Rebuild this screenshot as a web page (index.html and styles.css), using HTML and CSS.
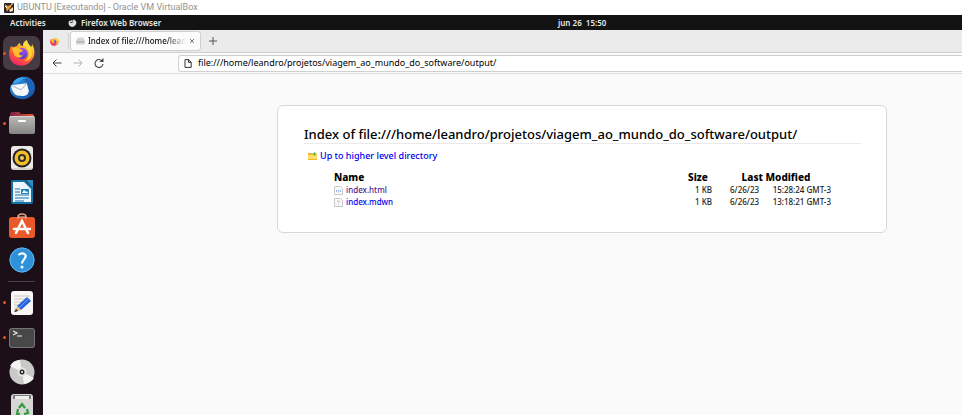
FILE: index.html
```html
<!DOCTYPE html>
<html lang="en">
<head>
<meta charset="utf-8">
<meta name="viewport" content="width=device-width, initial-scale=1">
<title>UBUNTU [Executando] - Oracle VM VirtualBox</title>
<link rel="stylesheet" href="styles.css">
</head>
<body>
<svg class="defs" width="0" height="0" aria-hidden="true">
  <defs>
    <linearGradient id="flame" x1=".8" y1="0" x2=".25" y2="1">
      <stop offset="0" stop-color="#fff04a"/><stop offset=".35" stop-color="#ffae28"/>
      <stop offset=".65" stop-color="#ff5a36"/><stop offset="1" stop-color="#e91f70"/>
    </linearGradient>
    <radialGradient id="globe" cx=".6" cy=".25" r=".8">
      <stop offset="0" stop-color="#a04df0"/><stop offset="1" stop-color="#4a3cc4"/>
    </radialGradient>
    <linearGradient id="bird" x1="0" y1="0" x2="1" y2="1">
      <stop offset="0" stop-color="#2f9be8"/><stop offset="1" stop-color="#174aa0"/>
    </linearGradient>
    <linearGradient id="silver" x1="0" y1="0" x2="0" y2="1">
      <stop offset="0" stop-color="#b9b9b7"/><stop offset="1" stop-color="#858583"/>
    </linearGradient>
    <linearGradient id="lid" x1="0" y1="0" x2="1" y2="0">
      <stop offset="0" stop-color="#7a2148"/><stop offset="1" stop-color="#e9592b"/>
    </linearGradient>
    <symbol id="firefox" viewBox="0 0 26 26">
      <path fill="url(#flame)" d="M2 6c1 1 2 1 3 1 1 0 2-1 3-1 1-2 2-3 3-3 0 2 1 3 3 3 0-3 1-5 4-6 0 3 2 4 4 7 1-1 1-2 1-3 4 7 3 14-2 18-5 5-13 5-18 0C0 18-1 12 2 6z"/>
      <circle cx="13" cy="13.500" r="5.500" fill="url(#globe)"/>
      <path fill="#ffbd2e" d="M3 8c3-1 6-1 8 1l3 1c-1 2-3 2-4 3 0 2 2 3 4 2-2 4-8 3-9-1-1-2-2-4-2-6z"/>
      <path fill="#ffd93b" d="M14 6c4 1 6 4 6 8 0 3-2 6-5 7 7 0 9-6 7-12-1-3-3-4-4-8-2 1-4 3-4 5z"/>
    </symbol>
  </defs>
</svg>

<header class="titlebar">
  <svg class="vm-icon" viewBox="0 0 10 10" aria-hidden="true"><rect width="10" height="10" rx="1" fill="#27252b"/><path d="M1 1l3 2 4-2-1 3-3 3-1 2-1-4z" fill="#e99d30"/><path d="M5 7l4-3v4l-3 1z" fill="#f4dfac"/><path d="M1 3l2 2M7 1h2" stroke="#fff"/></svg>
  <span>UBUNTU [Executando] - Oracle VM VirtualBox</span>
</header>

<div class="panel">
  <button class="activities" type="button">Activities</button>
  <button class="app-menu" type="button">
    <svg viewBox="0 0 26 26" aria-hidden="true"><path fill="#ddd" d="M2 6l6 0 3-3 3 3 4-6 4 7 1-3c4 7 3 14-2 18-5 5-13 5-18 0C0 18-1 12 2 6z"/><path d="M5 11h6l4-2" stroke="#333" stroke-width="3" fill="none"/></svg>
    Firefox Web Browser
  </button>
  <time class="clock">jun 26&nbsp; 15:50</time>
</div>

<div class="desktop">
  <nav class="dock" aria-label="Dock">
    <button class="app running active" type="button" aria-label="Firefox"><svg viewBox="0 0 26 26"><use href="#firefox"/></svg></button>
    <button class="app" type="button" aria-label="Thunderbird"><svg viewBox="0 0 28 26">
      <path fill="url(#bird)" d="M4 8C7 2 13 0 18 1c6 1 10 6 10 12 0 7-6 12-13 12C8 25 2 22 1 15c0-3 1-5 3-7z"/>
      <path fill="#f5f7fa" d="M2 10l17-2 3 10c-3 4-8 4-13 3-4-1-6-6-7-11z"/>
      <path fill="none" stroke="#9eabbc" d="M2 10l11 5 6-7"/>
      <path fill="#1b62b8" d="M11 2c6-2 13 1 15 7 1 7-3 12-9 15 5-5 6-11 3-16-2-3-5-4-9-6z"/>
      <path fill="#3aa7ef" d="M6 5c4-4 9-4 13-2-4 0-7 1-9 4l-6 1z"/></svg></button>
    <button class="app running" type="button" aria-label="Files"><svg viewBox="0 0 26 26">
      <path fill="url(#lid)" d="M1 4q0-2 2-2h7l2 2h11q2 0 2 2v7H1z"/>
      <rect y="6" width="26" height="18" rx="2" fill="url(#silver)"/><path d="M1 6.500h24" stroke="#d5d5d3"/>
      <rect x="9" y="10" width="8" height="2" rx="1" fill="#fff"/></svg></button>
    <button class="app" type="button" aria-label="Rhythmbox"><svg viewBox="0 0 26 26">
      <rect x="2" y="1" width="22" height="24" rx="3" fill="#ece9e4"/><path d="M4 24h18" stroke="#bdb8b2"/>
      <circle cx="13" cy="13" r="9.500" fill="#222"/><circle cx="13" cy="13" r="7.500" fill="#f2bd26"/>
      <circle cx="13" cy="13" r="4" fill="#34312b"/><circle cx="13" cy="13" r="2" fill="#f4cf55"/></svg></button>
    <button class="app" type="button" aria-label="LibreOffice Writer"><svg viewBox="0 0 26 26">
      <path fill="#1473a7" d="M4 1h12l8 8v14q0 2-2 2H4q-2 0-2-2V3q0-2 2-2z"/>
      <path fill="#eef7fc" d="M4 3h11l7 7v13H4z"/><path fill="#2d8cc0" d="M17 1h7v8z"/>
      <path d="M6 10h5M6 13h5M6 16h14M6 19h14M6 22h9" stroke="#1977ab"/>
      <rect x="12" y="10" width="8" height="5" fill="#2183b8"/><path fill="#fff" d="M13 14l2-3 2 2 1-1 1 2z"/></svg></button>
    <button class="app" type="button" aria-label="Ubuntu Software"><svg viewBox="0 0 26 26">
      <path d="M9 6V4q0-3 4-3t4 3v2" fill="none" stroke="#d9a184" stroke-width="1.500"/>
      <rect y="4" width="26" height="21" rx="3" fill="#e95a2b"/><path d="M9 6V4h8v2" fill="none" stroke="#f7c3a9"/>
      <path d="M7 20l6-12 6 12M5 16h16" fill="none" stroke="#fff" stroke-width="2.500" stroke-linecap="round"/></svg></button>
    <button class="app" type="button" aria-label="Help"><svg viewBox="0 0 26 26">
      <circle cx="13" cy="13" r="12.500" fill="#2e91da"/><circle cx="13" cy="13" r="12" fill="none" stroke="#62b4eb"/>
      <path d="M9.500 8q3.500-3 6.500-.5c3 3-3 5-3 9" fill="none" stroke="#fff" stroke-width="2.200"/><circle cx="13" cy="20" r="1.500" fill="#fff"/></svg></button>
    <hr class="divider">
    <button class="app running" type="button" aria-label="Text Editor"><svg viewBox="0 0 26 26">
      <rect x="2" y="1" width="22" height="24" rx="3" fill="#f8f7f5"/><path d="M5 6h16M5 9h16M5 12h16M5 15h9M5 18h5" stroke="#c8c6c2"/>
      <path fill="#2867d8" d="M18 7l4 4-10 9-4-4z"/><path d="M19 9l-9 9" stroke="#6da0f2"/><path fill="#e6b988" d="M8 16l4 4-6 2z"/><path fill="#222" d="M7 19l2 2-4 1z"/></svg></button>
    <button class="app running" type="button" aria-label="Terminal"><svg viewBox="0 0 26 26">
      <rect y="3" width="26" height="20" rx="3" fill="#747474"/><rect x="1" y="4" width="24" height="18" rx="2" fill="#484848"/>
      <path d="M4 6l4 2-4 2M8 11h5" stroke="#eee" fill="none" stroke-width="1.200"/></svg></button>
    <button class="app" type="button" aria-label="Disc"><svg viewBox="0 0 26 26">
      <circle cx="13" cy="13" r="12.500" fill="#c9c9c7"/><path fill="#f3f3f2" d="M13 13L1 7Q4 1 11 1zM13 13l12 6q-3 5-10 6z"/>
      <circle cx="13" cy="13" r="4.500" fill="#e5e5e3"/><circle cx="13" cy="13" r="2.500" fill="#292929"/><circle cx="13" cy="13" r="1" fill="#fff"/></svg></button>
    <button class="app" type="button" aria-label="Trash"><svg viewBox="0 0 26 26">
      <rect x="2" y="1" width="22" height="25" rx="3" fill="#d6d6d4"/><rect x="4" y="2" width="18" height="4" rx="1" fill="#777"/><path fill="#efefed" d="M6 3h14v3H6z"/>
      <path d="M10 15l3-4 3 4M18 16l1 4-4 1M11 21H8l1-5" fill="none" stroke="#2f9b3b" stroke-width="2.200"/></svg></button>
  </nav>

  <main class="browser">
    <div class="tabs">
      <button class="pinned" type="button" aria-label="Firefox View"><svg viewBox="0 0 26 26"><use href="#firefox"/></svg></button>
      <div class="tab">
        <svg class="drive" viewBox="0 0 10 8" aria-hidden="true"><path fill="#d5d5d8" d="M2 0h6l2 4v3q0 1-1 1H1Q0 8 0 7V4z"/><path d="M1 5h8" stroke="#9b9ba0"/></svg>
        <span class="tab-title">Index of file:///home/lean</span>
        <button class="close" type="button" aria-label="Close tab"><svg viewBox="0 0 6 6"><path d="M1 1l4 4M5 1L1 5" stroke="#555" stroke-width=".8"/></svg></button>
      </div>
      <button class="new-tab" type="button" aria-label="New tab"><svg viewBox="0 0 8 8"><path d="M4 0v8M0 4h8" stroke="#444" stroke-width=".9"/></svg></button>
    </div>
    <div class="toolbar">
      <button class="nav" type="button" aria-label="Back"><svg viewBox="0 0 10 10"><path d="M9.500 5H1M4.500 1.500L1 5l3.500 3.500" fill="none" stroke="#444"/></svg></button>
      <button class="nav" type="button" aria-label="Forward" disabled><svg viewBox="0 0 10 10"><path d="M.5 5H9M5.500 1.500L9 5 5.500 8.500" fill="none" stroke="#b4b4b4"/></svg></button>
      <button class="nav" type="button" aria-label="Reload"><svg viewBox="0 0 10 10"><path d="M8.500 3.500A4 4 0 1 0 9 6" fill="none" stroke="#444" stroke-width="1.100"/><path fill="#444" d="M9.500 0v4h-4z"/></svg></button>
      <label class="address">
        <svg viewBox="0 0 8 9" aria-hidden="true"><path d="M1 .6h3.500L7.200 3.300v5.100H1zM4.500.6v2.700h2.700" fill="none" stroke="#333" stroke-width="1"/></svg>
        <input type="text" aria-label="Address" value="file:///home/leandro/projetos/viagem_ao_mundo_do_software/output/">
      </label>
    </div>
    <div class="page">
      <section class="card">
        <h1>Index of file:///home/leandro/projetos/viagem_ao_mundo_do_software/output/</h1>
        <a class="up" href="#"><svg viewBox="0 0 9 8" aria-hidden="true"><path fill="#f0b928" d="M0 1h4l1 1h4v6H0z"/><path fill="#ffdc66" d="M0 3h9v4H0z"/><path fill="#5cb85a" d="M6.500 0L8.500 2H7.300v1.500H5.700V2H4.500z"/></svg>Up to higher level directory</a>
        <table>
          <thead><tr><th class="name">Name</th><th class="size">Size</th><th class="modified" colspan="2">Last Modified</th></tr></thead>
          <tbody>
            <tr><td class="name"><a class="visited" href="#"><svg viewBox="0 0 9 9" aria-hidden="true"><path d="M.5.500h6l2 2v6h-8z" fill="#fafafa" stroke="#bbb" stroke-width=".8"/><path d="M3 4L2 5l1 1M6 4l1 1-1 1M5 3.500l-1 3" fill="none" stroke="#6d9ce8" stroke-width=".7"/></svg>index.html</a></td><td class="size">1 KB</td><td class="date">6/26/23</td><td class="time">15:28:24 GMT-3</td></tr>
            <tr><td class="name"><a href="#"><svg viewBox="0 0 9 9" aria-hidden="true"><path d="M.5.500h6l2 2v6h-8z" fill="#fafafa" stroke="#bbb" stroke-width=".8"/><path d="M3 3.500q1.500-1.500 2.500 0c0 1-1 1-1 2M4.500 6.500v.8" fill="none" stroke="#aaa" stroke-width=".8"/></svg>index.mdwn</a></td><td class="size">1 KB</td><td class="date">6/26/23</td><td class="time">13:18:21 GMT-3</td></tr>
          </tbody>
        </table>
      </section>
    </div>
  </main>
</div>
</body>
</html>
```
FILE: styles.css
```css
* { box-sizing: border-box; }
body {
  margin: 0;
  height: 100vh;
  display: flex;
  flex-direction: column;
  overflow: hidden;
  background: #fff;
  color: #111;
  font: 8px/12px "Noto Sans", sans-serif;
}
button {
  padding: 0;
  border: 0;
  background: none;
  color: inherit;
  font: inherit;
}
svg { display: block; flex: none; }
.defs { position: absolute; }

.titlebar {
  display: flex;
  align-items: center;
  gap: 3px;
  height: 15px;
  padding: 0 4px;
  color: #929292;
  font: 9px/13px Roboto, sans-serif;
}
.vm-icon { width: 10px; height: 10px; }

.panel {
  display: grid;
  grid-template-columns: 58px 1fr;
  align-items: center;
  height: 15px;
  padding-left: 10px;
  background: #131313;
  color: #e8e8e8;
  font-weight: 600;
  position: relative;
}
.activities { justify-self: start; }
.app-menu { display: flex; align-items: center; gap: 4px; justify-self: start; }
.app-menu svg { width: 9px; height: 8px; }
.clock { position: absolute; left: 558px; }

.desktop { flex: 1; min-height: 0; display: flex; }
.dock {
  flex: 0 0 43px;
  padding-top: 5px;
  overflow: hidden;
  background: #1c0f17;
}
.app {
  display: flex;
  align-items: center;
  justify-content: center;
  width: 100%;
  height: 34px;
  position: relative;
}
.app svg { width: 26px; height: 26px; position: relative; }
.running { height: 36px; }
.divider ~ .running { height: 35px; }
.running::before {
  content: "";
  position: absolute;
  left: 3px;
  width: 3px;
  height: 3px;
  border-radius: 50%;
  background: #e95420;
}
.active::after {
  content: "";
  position: absolute;
  inset: 1px 3px;
  border-radius: 7px;
  background: #453b42;
}
.active svg, .active::before { z-index: 1; }
.divider { height: 1px; margin: 4px 8px 3px; border: 0; background: #47404a; }

.browser { flex: 1; min-width: 0; display: flex; flex-direction: column; background: #fafafa; }
.tabs {
  display: flex;
  align-items: center;
  height: 23px;
  background: #ebebeb;
  border-bottom: 1px solid #d0d0d0;
}
.pinned { width: 26px; height: 16px; padding-left: 7px; border-right: 1px solid #d0d0d0; }
.pinned svg { width: 9px; height: 9px; }
.tab {
  display: flex;
  align-items: center;
  gap: 3px;
  width: 131px;
  height: 20px;
  margin-left: 1px;
  padding: 0 6px 0 5px;
  border: 1px solid #d0d0d0;
  border-radius: 3px;
  background: #fcfcfc;
}
.drive { width: 9px; height: 8px; }
.tab-title {
  flex: 1;
  white-space: nowrap;
  font-weight: 500;
  mask-image: linear-gradient(to right, #000 80%, transparent);
}
.close svg { width: 6px; height: 6px; }
.new-tab { margin-left: 8px; }
.new-tab svg { width: 8px; height: 8px; }

.toolbar {
  display: flex;
  align-items: center;
  gap: 11px;
  height: 21px;
  padding-left: 9px;
  background: #fbfbfb;
  border-bottom: 1px solid #dedede;
}
.nav svg { width: 10px; height: 10px; }
.address {
  flex: 1;
  display: flex;
  align-items: center;
  gap: 6px;
  height: 17px;
  margin-left: 63px;
  padding-left: 5px;
  border: 1px solid #d0d0d0;
  border-right: 0;
  border-radius: 3px 0 0 3px;
  background: #fff;
}
.address svg { width: 8px; height: 9px; }
.address input {
  flex: 1;
  min-width: 0;
  padding: 0;
  border: 0;
  outline: 0;
  background: none;
  color: #000;
  font: 9px/12px "Noto Sans", sans-serif;
}

.page { flex: 1; padding: 31px 75px 0 234px; }
.card {
  padding: 20px 25px 24px 26px;
  border: 1px solid #d8d8d8;
  border-radius: 6px;
  background: #fff;
}
h1 {
  margin: 0 0 6px;
  border-bottom: 1px solid #eaeaea;
  color: #000;
  font-size: 13px;
  font-weight: 500;
  line-height: 17px;
  white-space: nowrap;
}
a { color: #0000ee; text-decoration: none; font-weight: 500; }
.up { display: flex; align-items: center; gap: 3px; margin-left: 4px; font-size: 9px; }
.up svg { width: 9px; height: 8px; }
table {
  width: calc(100% - 60px);
  margin: 8px 0 0 30px;
  border-collapse: collapse;
  table-layout: fixed;
  color: #222;
}
th, td { padding: 0; text-align: left; white-space: nowrap; }
th { color: #000; font-size: 10px; font-weight: 800; line-height: 14px; }
td { height: 12px; font-weight: 500; }
td a { display: flex; align-items: center; gap: 3px; }
td svg { width: 9px; height: 9px; }
.visited { color: #551a8b; }
.size { width: 24px; text-align: right; }
th.size { text-align: left; }
.modified { width: 119px; padding-left: 9px; text-align: center; }
.date { padding-left: 18px; }
.time { text-align: right; }
```
